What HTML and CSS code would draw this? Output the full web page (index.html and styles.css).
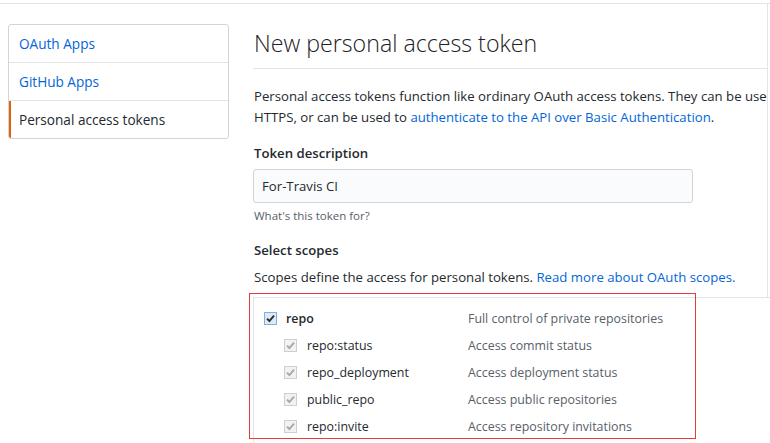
FILE: index.html
```html
<!DOCTYPE html>
<html>
<head>
<meta charset="utf-8">
<link rel="stylesheet" href="styles.css">
</head>
<body>
<div class="topbar"></div>
<div class="layout">
  <nav class="menu">
    <a class="menu-item">OAuth Apps</a>
    <a class="menu-item">GitHub Apps</a>
    <a class="menu-item selected">Personal access tokens</a>
  </nav>
  <main class="main">
    <div class="upper">
      <h1 class="title">New personal access token</h1>
      <p class="lead">Personal access tokens function like ordinary OAuth access tokens. They can be used<br>HTTPS, or can be used to <a class="link">authenticate to the API over Basic Authentication</a>.</p>
      <div class="label">Token description</div>
      <div class="input">For-Travis CI</div>
      <div class="note">What's this token for?</div>
      <div class="label label-scopes">Select scopes</div>
      <p class="scopes-desc">Scopes define the access for personal tokens. <a class="link">Read more about OAuth scopes.</a></p>
    </div>
    <div class="scopes">
      <div class="row parent">
        <div class="cell-name">
          <span class="cb cb-on"><svg viewBox="0 0 13 13" width="13" height="13"><path d="M3 6.6 L5.4 9 L10 3.6" fill="none" stroke="#2b2b2b" stroke-width="1.9"/></svg></span>
          <span class="name strong">repo</span>
        </div>
        <div class="desc">Full control of private repositories</div>
      </div>
      <div class="row child">
        <div class="cell-name">
          <span class="cb cb-dis"><svg viewBox="0 0 13 13" width="13" height="13"><path d="M3 6.6 L5.4 9 L10 3.6" fill="none" stroke="#a8a8a8" stroke-width="1.9"/></svg></span>
          <span class="name">repo:status</span>
        </div>
        <div class="desc">Access commit status</div>
      </div>
      <div class="row child">
        <div class="cell-name">
          <span class="cb cb-dis"><svg viewBox="0 0 13 13" width="13" height="13"><path d="M3 6.6 L5.4 9 L10 3.6" fill="none" stroke="#a8a8a8" stroke-width="1.9"/></svg></span>
          <span class="name">repo_deployment</span>
        </div>
        <div class="desc">Access deployment status</div>
      </div>
      <div class="row child">
        <div class="cell-name">
          <span class="cb cb-dis"><svg viewBox="0 0 13 13" width="13" height="13"><path d="M3 6.6 L5.4 9 L10 3.6" fill="none" stroke="#a8a8a8" stroke-width="1.9"/></svg></span>
          <span class="name">public_repo</span>
        </div>
        <div class="desc">Access public repositories</div>
      </div>
      <div class="row child">
        <div class="cell-name">
          <span class="cb cb-dis"><svg viewBox="0 0 13 13" width="13" height="13"><path d="M3 6.6 L5.4 9 L10 3.6" fill="none" stroke="#a8a8a8" stroke-width="1.9"/></svg></span>
          <span class="name">repo:invite</span>
        </div>
        <div class="desc">Access repository invitations</div>
      </div>
    </div>
    <div class="annotation"></div>
  </main>
</div>
</body>
</html>
```
FILE: styles.css
```css
* { box-sizing: border-box; }
html, body { margin: 0; padding: 0; background: #fff; overflow: hidden; }
body {
  font-family: "Segoe UI", "Open Sans", "Noto Sans", sans-serif;
  font-size: 13.2px;
  color: #24292e;
  width: 770px;
  height: 443px;
}
.topbar { height: 4px; border-bottom: 1px solid #e1e4e8; }
.layout { display: flex; align-items: flex-start; padding-top: 20px; }
.menu {
  margin-left: 8px;
  width: 221px;
  border: 1px solid #d1d5da;
  border-radius: 3px;
  display: flex;
  flex-direction: column;
  overflow: hidden;
}
.menu-item {
  height: 38px;
  line-height: 38px;
  padding-left: 10px;
  color: #0366d6;
  border-bottom: 1px solid #e1e4e8;
  font-size: 13.6px;
}
.menu-item:last-child { border-bottom: 0; height: 37px; }
.menu-item.selected { color: #24292e; border-left: 2px solid #e36209; padding-left: 8px; }
.main { margin-left: 24px; flex: 1; min-width: 0; position: relative; margin-top: -20px; }
.upper {
  border-right: 1px solid #e1e4e8;
  overflow: hidden;
  white-space: nowrap;
  margin-right: 2px;
  padding-top: 24px;
}
.title {
  margin: 0;
  font-size: 23.2px;
  font-weight: 300;
  line-height: 30px;
  padding-left: 1px;
  padding-bottom: 10px;
  border-bottom: 1px solid #e1e4e8;
  color: #1d2125;
}
.lead { margin: 17px 0 0 1px; line-height: 21px; }
.link { color: #0366d6; }
.label { font-weight: 600; margin: 15px 0 0 1px; line-height: 21px; }
.input {
  margin-top: 5px;
  width: 440px;
  height: 34px;
  background: #fafbfc;
  border: 1px solid #d1d5da;
  border-radius: 3px;
  padding-left: 8px;
  line-height: 32px;
}
.note { font-size: 11.5px; color: #586069; line-height: 18px; margin: 4px 0 0 1px; }
.label-scopes { margin-top: 15px; }
.scopes-desc { margin: 6px 0 0 1px; line-height: 21px; padding-bottom: 9px; }
.scopes {
  border-top: 1px solid #e1e4e8;
  border-left: 1px solid #e1e4e8;
  margin-right: -20px;
  padding: 7px 0 0 10px;
  height: 145px;
  font-size: 12.4px;
}
.row { display: flex; align-items: center; height: 27px; }
.cell-name { display: flex; align-items: center; width: 204px; }
.child .cell-name { padding-left: 20px; }
.cb { width: 13px; height: 13px; display: block; border: 1px solid; position: relative; flex: none; }
.cb svg { position: absolute; left: -1px; top: -1px; }
.cb-on { border-color: #86ace6; background: #dde9f8; }
.cb-dis { border-color: #cfcfcf; background: #f2f2f2; }
.name { margin-left: 9px; }
.child .name { margin-left: 10px; }
.strong { font-weight: 600; }
.desc { color: #586069; }
.annotation {
  position: absolute;
  left: -4px;
  top: 289px;
  width: 447px;
  height: 146px;
  border: 1px solid #e8393d;
  pointer-events: none;
}
```
